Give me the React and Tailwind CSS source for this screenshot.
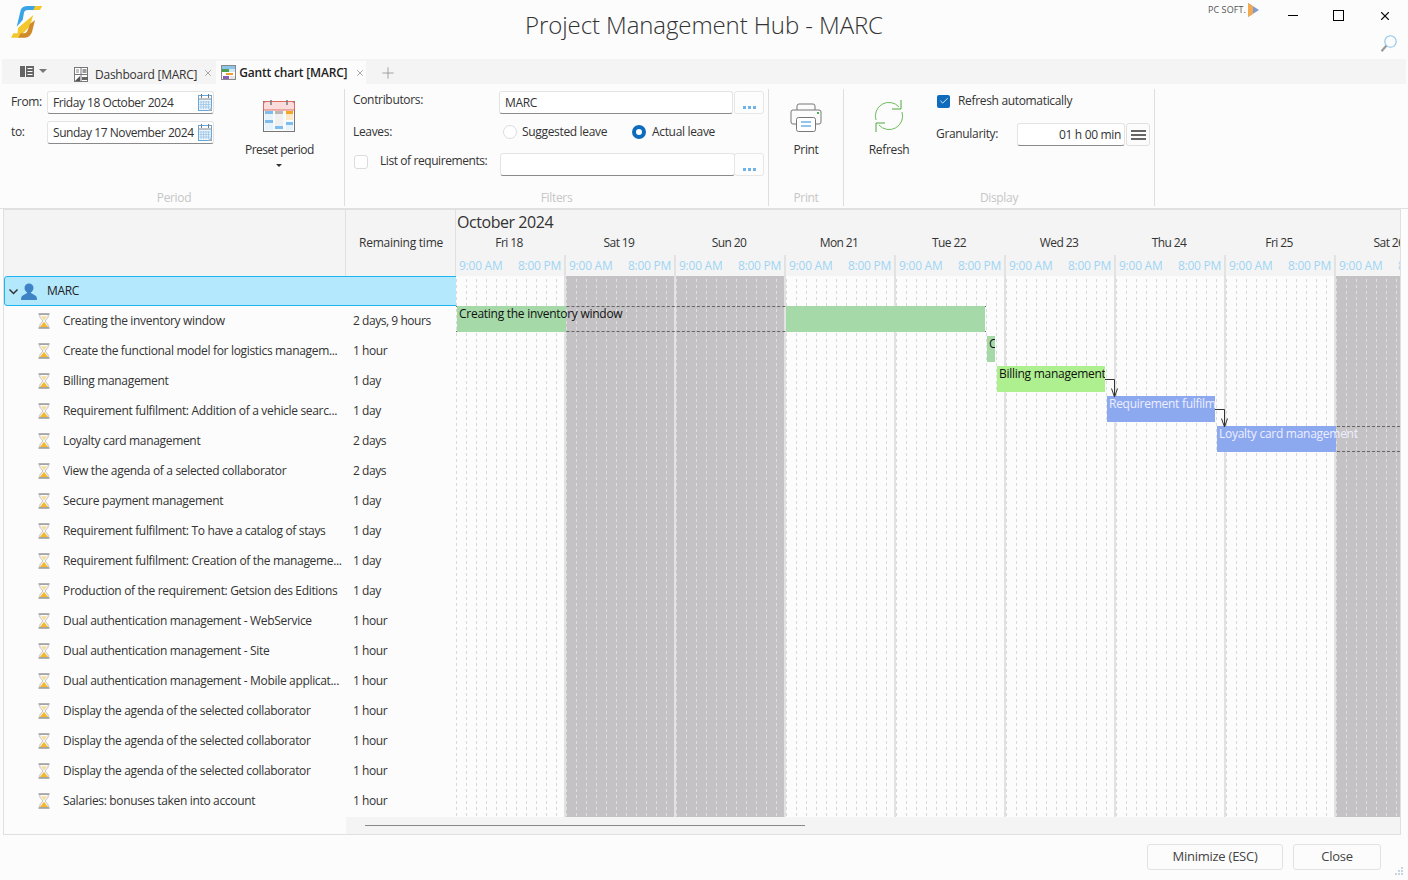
import React from "react";
import { X, Plus, Check } from "lucide-react";

const TASKS = [
  ["Creating the inventory window", "2 days, 9 hours"],
  ["Create the functional model for logistics managem...", "1 hour"],
  ["Billing management", "1 day"],
  ["Requirement fulfilment: Addition of a vehicle searc...", "1 day"],
  ["Loyalty card management", "2 days"],
  ["View the agenda of a selected collaborator", "2 days"],
  ["Secure payment management", "1 day"],
  ["Requirement fulfilment: To have a catalog of stays", "1 day"],
  ["Requirement fulfilment: Creation of the manageme...", "1 day"],
  ["Production of the requirement: Getsion des Editions", "1 day"],
  ["Dual authentication management - WebService", "1 hour"],
  ["Dual authentication management - Site", "1 hour"],
  ["Dual authentication management - Mobile applicat...", "1 hour"],
  ["Display the agenda of the selected collaborator", "1 hour"],
  ["Display the agenda of the selected collaborator", "1 hour"],
  ["Display the agenda of the selected collaborator", "1 hour"],
  ["Salaries: bonuses taken into account", "1 hour"],
];

const DAYS = [
  ["Fri 18", false],
  ["Sat 19", true],
  ["Sun 20", true],
  ["Mon 21", false],
  ["Tue 22", false],
  ["Wed 23", false],
  ["Thu 24", false],
  ["Fri 25", false],
  ["Sat 26", true],
];

function Logo() {
  return (
    <svg width="44" height="44" viewBox="0 0 44 44">
      <path d="M16.7 26.7L20.7 10Q22 6 28 6H36.7L34.3 10H28Q24.5 10 24 12.7L22.7 20Z" fill="#3aa5e6" />
      <path d="M35 6H42.3L40 10H33.3Z" fill="#f2c82e" />
      <path d="M33.3 15L30 26L22 34.5L19 37.7H11L13.3 33.3H17.6L18 28Z" fill="#f2c82e" />
      <path d="M35 20L32 32Q30 37.7 25 37.7H18.3L20.7 33.3H24Q27 33 27.7 30L30 24Z" fill="#d08a2a" />
    </svg>
  );
}

function SidebarIcon() {
  return (
    <svg width="14" height="11" viewBox="0 0 14 11">
      <rect x="0" y="0" width="5" height="11" fill="#666" />
      <rect x="6" y="0" width="8" height="11" fill="#666" />
      <path d="M7.5 2.5h5M7.5 5.5h5M7.5 8.5h5" stroke="#fff" strokeWidth="1" />
    </svg>
  );
}

function DashboardIcon() {
  return (
    <svg width="14" height="15" viewBox="0 0 14 15">
      <rect x="0.5" y="0.5" width="13" height="14" fill="#fff" stroke="#777" />
      <path d="M7 0v15M0 7.5h14" stroke="#777" />
      <path d="M2 3h3M2 5h3" stroke="#888" />
      <rect x="8.5" y="2" width="4" height="4" fill="#999" />
      <path d="M1 14l5-5v5z" fill="#555" />
      <rect x="8" y="10" width="6" height="3" fill="#666" />
    </svg>
  );
}

function GanttIcon() {
  return (
    <svg width="15" height="15" viewBox="0 0 15 15">
      <rect x="0.5" y="0.5" width="14" height="14" fill="#fff" stroke="#888" />
      <rect x="1" y="1" width="13" height="3" fill="#8cc5ea" />
      <rect x="1" y="4" width="7" height="3" fill="#4ea04e" />
      <rect x="8" y="4" width="6" height="3" fill="#cfe8f8" />
      <rect x="5" y="8" width="7" height="2" fill="#f0a030" />
      <rect x="2" y="11" width="6" height="3" fill="#8b5fb5" />
      <rect x="9" y="11" width="5" height="3" fill="#e4e4e4" />
    </svg>
  );
}

function CalendarSmall() {
  return (
    <svg width="14" height="17" viewBox="0 0 14 17">
      <rect x="0.5" y="1.5" width="13" height="15" fill="#eaf4fc" stroke="#6aa7d8" />
      <rect x="1" y="2" width="12" height="3" fill="#fff" />
      <path d="M3.5 0v4M10.5 0v4" stroke="#777" />
      <path d="M1 5h12" stroke="#888" />
      <path d="M3 7v8M5.5 7v8M8 7v8M10.5 7v8M1.5 8h11M1.5 10.5h11M1.5 13h11" stroke="#a8cbe8" strokeWidth="1" />
      <path d="M10 16.5l3.5-3.5v3.5z" fill="#bbb" />
    </svg>
  );
}

function CalendarBig() {
  return (
    <svg width="32" height="32" viewBox="0 0 32 32">
      <rect x="0.5" y="1.5" width="31" height="30" fill="#f7fbfe" stroke="#777" />
      <path d="M0.5 10V4Q0.5 1.5 3 1.5H29Q31.5 1.5 31.5 4V10Z" fill="#fbdcdc" stroke="#e06a60" />
      <path d="M8 0v5M24 0v5" stroke="#777" strokeWidth="1.5" />
      <rect x="2" y="11" width="8" height="3" fill="#7fbcee" />
      <rect x="2" y="14" width="8" height="16" fill="#e6f3fb" />
      <rect x="2" y="20" width="8" height="3" fill="#7fbcee" />
      <rect x="12" y="11" width="8" height="3" fill="#b8b8b8" />
      <rect x="12" y="14" width="8" height="12" fill="#f0f0f0" />
      <rect x="12" y="26" width="8" height="3" fill="#7fbcee" />
      <rect x="23" y="11" width="7" height="3" fill="#f5a623" />
      <rect x="23" y="14" width="7" height="6" fill="#fbe8c8" />
      <rect x="23" y="22" width="7" height="3" fill="#7fbcee" />
      <rect x="23" y="25" width="7" height="5" fill="#e6f3fb" />
    </svg>
  );
}

function PrinterIcon() {
  return (
    <svg width="32" height="30" viewBox="0 0 32 30" fill="none">
      <path d="M7 7V3Q7 1 9 1H23Q25 1 25 3V7" stroke="#777" />
      <path d="M6 21H3Q1 21 1 19V9Q1 7 3 7H29Q31 7 31 9V19Q31 21 29 21H26" stroke="#777" />
      <rect x="6.5" y="14.5" width="19" height="14" rx="2" fill="#fff" stroke="#777" />
      <path d="M11 19h10M11 23h10" stroke="#6fb3e8" strokeWidth="1.5" />
      <rect x="27" y="9" width="2" height="2" fill="#4caf50" />
    </svg>
  );
}

function RefreshIcon() {
  return (
    <svg width="32" height="32" viewBox="0 0 32 32" fill="none" stroke="#6cbb5a" strokeWidth="1">
      <path d="M3 20 A13.5 13.5 0 0 1 26 7" />
      <path d="M28 0v9h-9" stroke="#4aa83a" />
      <path d="M29 12 A13.5 13.5 0 0 1 6 25" />
      <path d="M3 32v-9h9" stroke="#4aa83a" />
    </svg>
  );
}

function SearchGlass() {
  return (
    <svg width="17" height="18" viewBox="0 0 17 18" fill="none">
      <circle cx="10.5" cy="6.5" r="5.7" stroke="#8cc5ea" strokeWidth="1.1" />
      <path d="M6.3 10.8L1.5 16.2" stroke="#9a9a9a" strokeWidth="2.2" />
    </svg>
  );
}

function PersonIcon() {
  return (
    <svg width="16" height="17" viewBox="0 0 16 17">
      <circle cx="8" cy="5" r="4.5" fill="#3d83c6" />
      <path d="M6 8h4v2l5 3q1 1 1 4H0q0-3 1-4l5-3z" fill="#3d83c6" />
    </svg>
  );
}

function Hourglass() {
  return (
    <svg width="12" height="16" viewBox="0 0 12 16">
      <path d="M1.8 1.5h8.4v2.5L7 8l3.2 4v2.5H1.8V12L5 8 1.8 4z" fill="#fdfdfd" stroke="#b0b0b0" strokeWidth="0.8" />
      <path d="M2.8 3.2h6.4L6 7.4z" fill="#f7dc9a" />
      <path d="M6 8.8l4 5.2H2z" fill="#f4b82e" />
      <path d="M0.5 1h11M0.5 15h11" stroke="#9a9a9a" strokeWidth="1.4" />
    </svg>
  );
}

function DotsButton() {
  return (
    <div className="w-[30px] h-[23px] rounded-[3px] border border-[#e6e6e6] bg-[#fdfdfd] flex items-end justify-center pb-[4px] gap-[2px]">
      <span className="w-[3px] h-[3px] bg-[#6fb3e8]" />
      <span className="w-[3px] h-[3px] bg-[#6fb3e8]" />
      <span className="w-[3px] h-[3px] bg-[#6fb3e8]" />
    </div>
  );
}

function Input({ className, children }) {
  return (
    <div className={`h-[23px] rounded-[3px] border border-[#e4e4e4] border-b-[#8a8a8a] bg-white flex items-center px-[5px] text-[#333] whitespace-nowrap ${className}`}>
      {children}
    </div>
  );
}

function Group({ className, label, children }) {
  return (
    <div className={`h-[117px] border-r border-[#dedede] flex flex-col shrink-0 ${className}`}>
      <div className="flex-1 relative">{children}</div>
      <div className="text-center text-[#c6c6c6] h-[17px] leading-[17px]">{label}</div>
    </div>
  );
}

function DayHead({ name, index }) {
  return (
    <div className="w-[110px] shrink-0 flex flex-col">
      <div className="h-[22px] leading-[22px] text-center text-[#333] pr-[4px] whitespace-nowrap tracking-[-0.6px]">{name}</div>
      <div className={`h-[22px] mt-[1px] flex justify-between items-center pl-[3px] pr-[5px] text-[#9fd4f4] tracking-[-0.25px] ${index > 0 ? "border-l-2 border-[#e2e2e2] -ml-[2px]" : ""}`}>
        <span>9:00 AM</span>
        <span>8:00 PM</span>
      </div>
    </div>
  );
}

function DayCol({ off }) {
  return off ? (
    <div className="w-[112px] shrink-0 h-full border-l-2 border-[#e2e2e2] -ml-[2px] bg-[#c4c2c4] bg-[linear-gradient(#c4c2c4_3px,transparent_3px),linear-gradient(90deg,#e0e0e0_1px,transparent_1px)] bg-[size:100%_6px,10px_100%]" />
  ) : (
    <div className="w-[112px] shrink-0 h-full border-l-2 border-[#e2e2e2] -ml-[2px] bg-[linear-gradient(#fcfcfc_3px,transparent_3px),linear-gradient(90deg,#d8d8d8_1px,transparent_1px)] bg-[size:100%_6px,10px_100%]" />
  );
}

function Bar({ left, top, width, color, text, textColor }) {
  return (
    <div className={`absolute h-[26px] pl-[2px] leading-[15px] tracking-[-0.27px] whitespace-nowrap overflow-hidden ${color} ${textColor}`} style={{ left, top, width }}>
      {text}
    </div>
  );
}

function Arrow({ left, top }) {
  return (
    <svg className="absolute" style={{ left, top }} width="13" height="19" viewBox="0 0 13 19" fill="none" stroke="#333">
      <path d="M0 0.5H9.5V18" />
      <path d="M6.5 9.5L9.5 18L12.5 9.5" />
    </svg>
  );
}

export default function App() {
  return (
    <div className="w-[1408px] h-[880px] overflow-hidden bg-[#fcfcfc] text-[12px] text-[#333] font-['Open_Sans','Liberation_Sans',sans-serif] tracking-[-0.33px] relative">
      {/* title bar */}
      <div className="h-[59px] flex relative">
        <Logo />
        <div className="absolute left-0 right-0 top-[7px] text-center text-[24px] font-light text-[#333] tracking-[-0.1px]">Project Management Hub - MARC</div>
        <div className="ml-auto flex flex-col items-end">
          <div className="flex items-start pt-[3px]">
            <span className="text-[9px] leading-[12px] text-[#555] mt-[1px] tracking-[0.1px]">PC SOFT.</span>
            <svg className="ml-[1px]" width="12" height="14" viewBox="0 0 12 14">
              <path d="M1 0l11 7-11 7z" fill="#7f9bd0" />
              <path d="M1 0l5 3.2v7.6L1 14z" fill="#f2a950" />
            </svg>
            <span className="ml-[29px] mt-[12px] w-[10px] h-[1px] bg-black" />
            <span className="ml-[35px] mt-[7px] w-[11px] h-[11px] border border-black" />
            <X className="ml-[34px] mt-[6px] mr-[16px]" size={14} strokeWidth={1.1} color="#111" absoluteStrokeWidth />
          </div>
          <div className="mr-[11px] mt-[12px]"><SearchGlass /></div>
        </div>
      </div>

      {/* tabs */}
      <div className="h-[25px] ml-[2px] mr-[2px] bg-[#f4f4f4] flex items-end">
        <div className="ml-[18px] mb-[7px]"><SidebarIcon /></div>
        <span className="ml-[5px] mb-[11px] w-0 h-0 border-x-[4px] border-x-transparent border-t-[4px] border-t-[#777]" />
        <div className="ml-[27px] mb-[2px]"><DashboardIcon /></div>
        <span className="ml-[7px] leading-[18px] tracking-[-0.25px]">Dashboard [MARC]</span>
        <X className="ml-[6px] mb-[6px]" size={10} color="#999" />
        <div className="ml-[3px] w-[150px] h-[23px] bg-[#fcfcfc] flex items-center pl-[5px]">
          <GanttIcon />
          <span className="ml-[3px] font-semibold text-[#222] tracking-[-0.2px]">Gantt chart [MARC]</span>
          <X className="ml-[8px]" size={10} color="#999" />
        </div>
        <Plus className="ml-[13px] mb-[2px]" size={18} strokeWidth={1} color="#888" />
      </div>

      {/* ribbon */}
      <div className="h-[125px] pt-[5px] flex border-b border-[#e0e0e0]">
        <Group className="w-[345px]" label={<span className="block pl-[4px]">Period</span>}>
          <div className="flex h-full">
            <div className="pl-[11px] pt-[2px] flex flex-col gap-[7px]">
              <div className="flex items-center gap-[5px]">
                <span className="w-[31px] -mt-[2px]">From:</span>
                <Input className="w-[167px] justify-between pr-[1px] tracking-[-0.45px]"><span>Friday 18 October 2024</span><CalendarSmall /></Input>
              </div>
              <div className="flex items-center gap-[5px]">
                <span className="w-[31px] -mt-[2px]">to:</span>
                <Input className="w-[167px] justify-between pr-[1px] tracking-[-0.45px]"><span>Sunday 17 November 2024</span><CalendarSmall /></Input>
              </div>
            </div>
            <div className="ml-[31px] flex flex-col items-center pt-[11px]">
              <CalendarBig />
              <span className="mt-[9px] tracking-[-0.5px]">Preset period</span>
              <span className="mt-[5px] w-0 h-0 border-x-[3px] border-x-transparent border-t-[3px] border-t-[#333]" />
            </div>
          </div>
        </Group>
        <Group className="w-[424px]" label="Filters">
          <div className="pl-[8px] pt-[2px] flex flex-col">
            <div className="flex h-[23px]">
              <span className="w-[146px]">Contributors:</span>
              <Input className="w-[234px]">MARC</Input>
              <div className="ml-[1px]"><DotsButton /></div>
            </div>
            <div className="flex h-[35px] items-center">
              <span className="w-[146px] mt-[1px]">Leaves:</span>
              <span className="ml-[4px] w-[14px] h-[14px] rounded-full border border-[#dcdcdc] bg-white" />
              <span className="ml-[5px] w-[110px]">Suggested leave</span>
              <span className="w-[14px] h-[14px] rounded-full border-[4px] border-[#0f6cbd] bg-white" />
              <span className="ml-[6px]">Actual leave</span>
            </div>
            <div className="flex h-[23px] mt-[4px] items-start">
              <span className="w-[14px] h-[14px] rounded-[3px] border border-[#dcdcdc] bg-white ml-[1px] mt-[2px]" />
              <span className="ml-[12px] w-[120px] leading-[16px] whitespace-nowrap tracking-[-0.42px]">List of requirements:</span>
              <Input className="w-[235px]" />
              <div className="-ml-[1px]"><DotsButton /></div>
            </div>
          </div>
        </Group>
        <Group className="w-[75px]" label="Print">
          <div className="flex flex-col items-center pt-[14px]">
            <PrinterIcon />
            <span className="mt-[8px]">Print</span>
          </div>
        </Group>
        <Group className="w-[311px]" label="Display">
          <div className="flex h-full">
            <div className="ml-[29px] w-[32px] flex flex-col items-center pt-[11px]">
              <RefreshIcon />
              <span className="mt-[9px]">Refresh</span>
            </div>
            <div className="ml-[31px] pt-[3px]">
              <div className="flex items-center ml-[1px] h-[18px]">
                <span className="w-[13px] h-[13px] rounded-[2px] bg-[#0f6cbd] flex items-center justify-center"><Check size={10} color="#fff" strokeWidth={2} /></span>
                <span className="ml-[8px]">Refresh automatically</span>
              </div>
              <div className="flex items-center mt-[13px]">
                <span className="w-[81px] -mt-[2px]">Granularity:</span>
                <Input className="w-[108px] justify-end pr-[3px]">01 h 00 min</Input>
                <div className="ml-[1px] w-[24px] h-[23px] rounded-[3px] border border-[#e0e0e0] flex flex-col items-center justify-center gap-[2px]">
                  <span className="w-[15px] h-[2px] bg-[#666]" />
                  <span className="w-[15px] h-[2px] bg-[#666]" />
                  <span className="w-[15px] h-[2px] bg-[#666]" />
                </div>
              </div>
            </div>
          </div>
        </Group>
      </div>

      {/* gantt panel */}
      <div className="ml-[3px] w-[1398px] h-[626px] border border-[#e0e0e0] flex flex-col">
        <div className="h-[66px] flex bg-[#f4f4f4] shrink-0">
          <div className="w-[342px] border-r border-[#e0e0e0]" />
          <div className="w-[110px] border-r border-[#e0e0e0] pt-[24px] pl-[13px] tracking-[-0.25px]">Remaining time</div>
          <div className="flex-1 overflow-hidden">
            <div className="h-[22px] pl-[1px] pt-[2px] text-[16px] leading-[20px] tracking-[-0.45px]">October 2024</div>
            <div className="flex">
              {DAYS.map((d, i) => (
                <DayHead key={i} index={i} name={d[0]} />
              ))}
            </div>
          </div>
        </div>
        <div className="flex-1 flex min-h-0">
          <div className="w-[452px] shrink-0">
            <div className="h-[30px] w-[453px] flex items-center bg-[#b3e8fd] border border-[#1eb4f0] rounded-l-[3px] relative">
              <svg className="ml-[3px]" width="11" height="11" viewBox="0 0 11 11" fill="none" stroke="#333" strokeWidth="1.5">
                <path d="M1.5 3.5L5.5 7.5L9.5 3.5" />
              </svg>
              <span className="ml-[2px]"><PersonIcon /></span>
              <span className="ml-[10px] text-[#222]">MARC</span>
            </div>
            {TASKS.map((t, i) => (
              <div key={i} className="h-[30px] flex items-center">
                <div className="ml-[34px] w-[12px] flex"><Hourglass /></div>
                <div className="ml-[13px] w-[290px] whitespace-nowrap overflow-hidden">{t[0]}</div>
                <div className="whitespace-nowrap tracking-[-0.45px]">{t[1]}</div>
              </div>
            ))}
          </div>
          <div className="flex-1 relative overflow-hidden flex">
            {DAYS.map((d, i) => (
              <DayCol key={i} off={d[1]} />
            ))}
            {/* task bars */}
            <div className="absolute left-[0px] top-[30px] w-[530px] h-[26px] border-y border-dashed border-[#666]" />
            <Bar left={1} top={30} width={109} color="bg-[#a5d9a8]" />
            <Bar left={330} top={30} width={199} color="bg-[#a5d9a8]" />
            <div className="absolute left-[3px] top-[30px] leading-[15px] text-[#111] whitespace-nowrap tracking-[-0.27px]">Creating the inventory window</div>
            <Bar left={531} top={60} width={8} color="bg-[#a5d9a8]" textColor="text-[#111]" text="Create the functional model" />
            <Bar left={541} top={90} width={108} color="bg-[#aef08f]" textColor="text-[#111]" text="Billing management" />
            <Bar left={651} top={120} width={108} color="bg-[#8ca9f0]" textColor="text-[#eef]" text="Requirement fulfilment" />
            <div className="absolute left-[761px] top-[150px] w-[183px] h-[26px] border-y border-dashed border-[#666]" />
            <Bar left={761} top={150} width={119} color="bg-[#8ca9f0]" />
            <div className="absolute left-[763px] top-[150px] leading-[15px] text-[#eef] whitespace-nowrap tracking-[-0.27px]">Loyalty card management</div>
            <Arrow left={649} top={103} />
            <Arrow left={759} top={133} />
          </div>
        </div>
        <div className="h-[17px] flex shrink-0">
          <div className="w-[342px]" />
          <div className="flex-1 bg-[#f4f4f4] pl-[19px] pt-[8px]">
            <div className="w-[440px] h-[1px] bg-[#888]" />
          </div>
        </div>
      </div>

      {/* footer */}
      <div className="flex justify-end pr-[27px] pt-[9px] gap-[10px]">
        <div className="w-[136px] h-[26px] rounded-[3px] border border-[#e2e2e2] flex items-center justify-center text-[13px] text-[#444] tracking-[-0.25px]">Minimize (ESC)</div>
        <div className="w-[88px] h-[26px] rounded-[3px] border border-[#e2e2e2] flex items-center justify-center text-[13px] text-[#444] tracking-[-0.25px]">Close</div>
      </div>

      {/* resize grip */}
      <svg className="absolute left-[1395px] top-[867px]" width="8" height="8" viewBox="0 0 8 8" fill="#c8d4de">
        <rect x="6" y="0" width="2" height="2" />
        <rect x="3" y="3" width="2" height="2" />
        <rect x="6" y="3" width="2" height="2" />
        <rect x="0" y="6" width="2" height="2" />
        <rect x="3" y="6" width="2" height="2" />
        <rect x="6" y="6" width="2" height="2" />
      </svg>
    </div>
  );
}
